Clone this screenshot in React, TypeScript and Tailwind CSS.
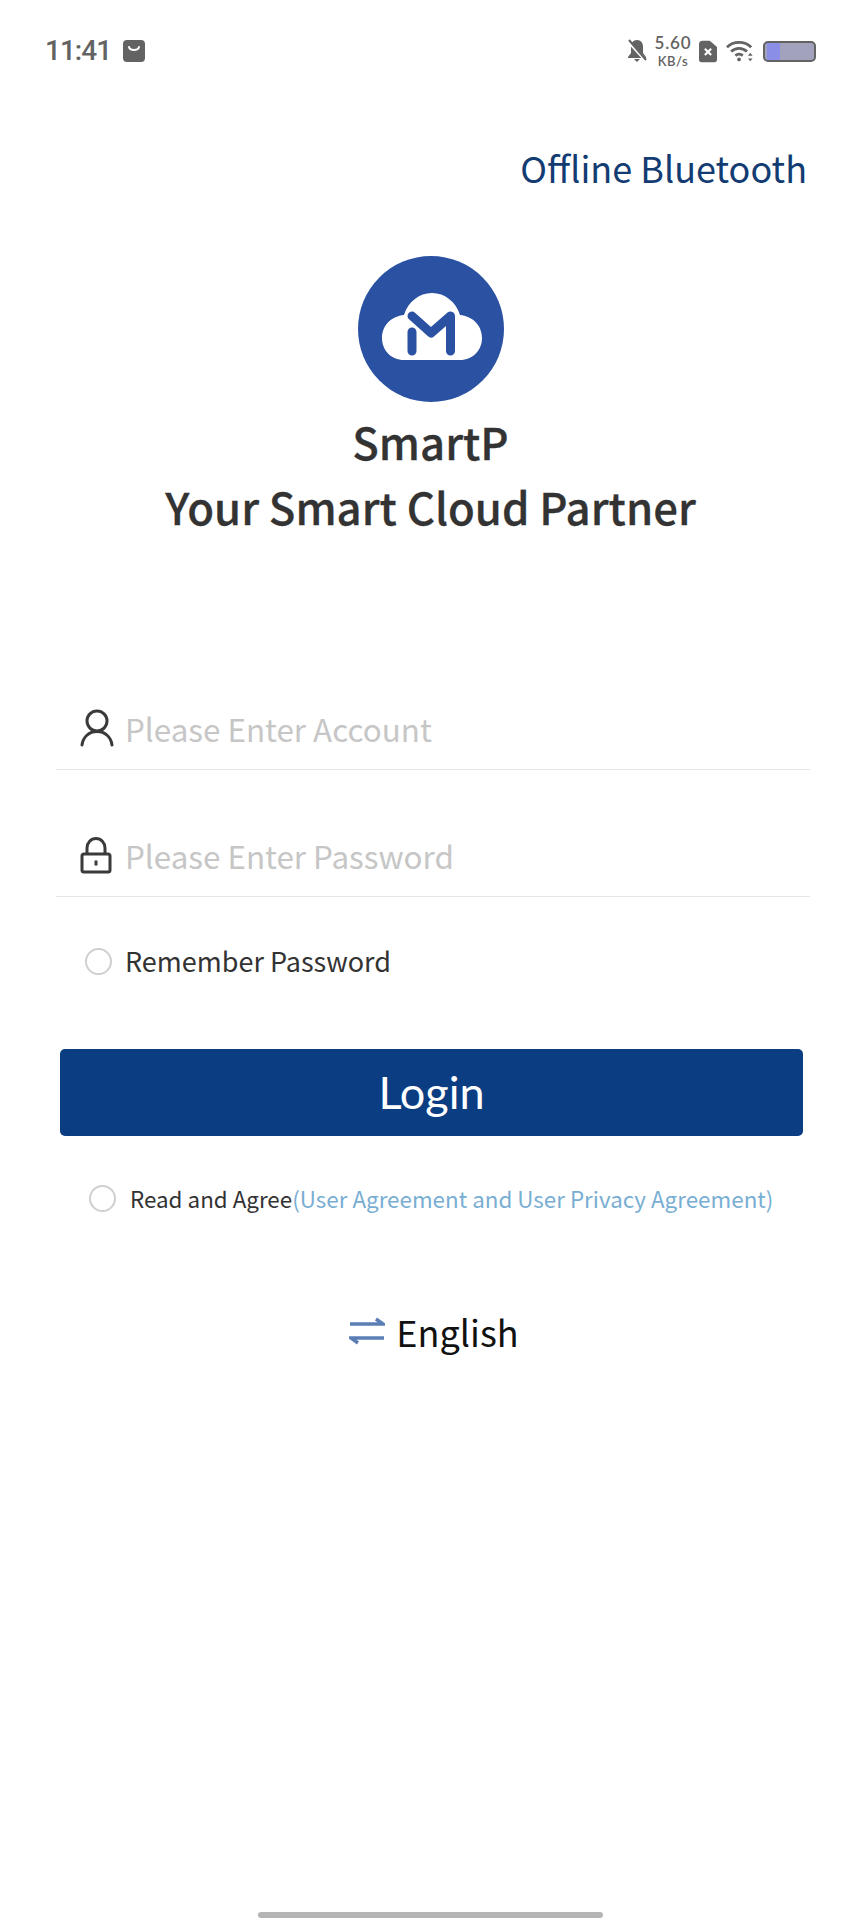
const font = "font-['Noto_Sans_CJK_SC','Noto_Sans',sans-serif]";

const StatusBar = () => (
  <div className="flex h-[102px] items-center justify-between pl-[45px] pr-[45px]">
    <div className="flex items-center gap-[12px]">
      <span className="font-['Roboto',sans-serif] text-[28px] font-medium leading-none tracking-[-1px] text-[#636363]">
        11:41
      </span>
      <svg width="22" height="22" viewBox="0 0 22 22">
        <rect width="22" height="22" rx="4" fill="#636363" />
        <path d="M6 7c1 4 9 4 10 0" fill="none" stroke="#fff" strokeWidth="2" strokeLinecap="round" />
      </svg>
    </div>
    <div className="flex items-center">
      <svg width="20" height="24" viewBox="0 0 20 24" className="mr-[7px]">
        <path d="M10 1c-4 0-6 3-6 7v6l-3 4v1h18v-1l-3-4V8c0-4-2-7-6-7z" fill="#636363" />
        <path d="M7 20h6l-3 3z" fill="#636363" />
        <path d="M1 2l18 20" stroke="#fff" strokeWidth="3" />
        <path d="M2 1l17 20" stroke="#636363" strokeWidth="2" />
      </svg>
      <div className="mr-[7px] flex w-[38px] flex-col items-center font-['Lato',sans-serif] font-semibold text-[#636363]">
        <span className="text-[17px] leading-[20px] tracking-[0.8px]">5.60</span>
        <span className="text-[13px] leading-[16px] tracking-[0.5px]">KB/s</span>
      </div>
      <svg width="18" height="23" viewBox="0 0 20 24" className="mr-[9px]">
        <path d="M4 0h8l8 7v14a3 3 0 0 1-3 3H3a3 3 0 0 1-3-3V4a4 4 0 0 1 4-4z" fill="#636363" />
        <path d="M6.500 9l7 7M13.500 9l-7 7" stroke="#fff" strokeWidth="2.400" />
      </svg>
      <svg width="28" height="22" viewBox="0 0 30 22" className="mr-[9px]">
        <path d="M1 7c7-7 19-7 26 0" fill="none" stroke="#636363" strokeWidth="3" />
        <path d="M5.500 11.500c5-4.500 12-4.500 17 0" fill="none" stroke="#636363" strokeWidth="3" />
        <path d="M10 16c2.500-2 5.500-2 8 0" fill="none" stroke="#636363" strokeWidth="3" />
        <circle cx="14" cy="20" r="2" fill="#636363" />
        <path d="M26 13l-2.500 3h5zM26 22l-2.500-3h5z" fill="#636363" />
      </svg>
      <div className="h-[21px] w-[53px] overflow-hidden rounded-[5px] border-2 border-[#636363] bg-[#a2a2bd]">
        <div className="ml-[2px] h-full w-[13px] bg-[#8a8ee6]" />
      </div>
    </div>
  </div>
);

const Logo = () => (
  <svg width="146" height="146" viewBox="0 0 146 146">
    <circle cx="73" cy="73" r="73" fill="#2b51a3" />
    <path
      d="M46 104C33 104 24 94 24 82C24 69 34 60 46 59C50 46 61 37 74 37C87 37 98 46 102 59C114 60 124 69 124 82C124 94 115 104 102 104Z"
      fill="#fff"
    />
    <path
      d="M54 60L73 77L92.500 60V95M54 76V95"
      fill="none"
      stroke="#2b51a3"
      strokeWidth="9"
      strokeLinecap="round"
      strokeLinejoin="round"
    />
  </svg>
);

const UserIcon = () => (
  <svg width="36" height="38" viewBox="0 0 36 38" fill="none" stroke="#3a3a3a" strokeWidth="3" strokeLinecap="round">
    <circle cx="17" cy="12" r="10" />
    <path d="M2 36C3 28 9 22.500 17 22.500S31 28 32 36" />
  </svg>
);

const LockIcon = () => (
  <svg width="32" height="38" viewBox="0 0 32 38" fill="none" stroke="#3a3a3a" strokeWidth="3">
    <rect x="2" y="18" width="28" height="18" rx="2" />
    <path d="M7 18v-6a9 9.500 0 0 1 18 0v6" />
    <path d="M16 24.500v5" />
  </svg>
);

const InputRow = ({ icon, placeholder }: { icon: React.ReactNode; placeholder: string }) => (
  <div className="flex h-[65px] items-start border-b border-[#e6e6e6] pl-[24px]">
    <div className="flex h-[46px] w-[45px] items-center">{icon}</div>
    <span className="pt-[1px] text-[31.400px] leading-[46px] text-[#c6c6c6]">{placeholder}</span>
  </div>
);

const Radio = () => <span className="h-[27px] w-[27px] shrink-0 rounded-full border-2 border-[#cfcfcf]" />;

export default function App() {
  return (
    <div className={`${font} flex min-h-[1920px] flex-col bg-white`}>
      <StatusBar />

      <div className="mt-[40px] flex justify-end pr-[54px]">
        <button className="text-[36px] leading-[50px] text-[#123c72]">Offline Bluetooth</button>
      </div>

      <div className="mt-[64px] flex flex-col items-center text-[#333333]">
        <Logo />
        <h1 className="mt-[7px] text-[43.700px] font-medium leading-[65px] [-webkit-text-stroke:0.3px_#333333]">SmartP</h1>
        <h2 className="text-[43.700px] font-medium leading-[65px] [-webkit-text-stroke:0.3px_#333333]">
          Your Smart Cloud Partner
        </h2>
      </div>

      <div className="ml-[56px] mr-[51px] mt-[166px]">
        <InputRow icon={<UserIcon />} placeholder="Please Enter Account" />
        <div className="mt-[62px]">
          <InputRow icon={<LockIcon />} placeholder="Please Enter Password" />
        </div>
      </div>

      <div className="ml-[85px] mt-[43px] flex items-center gap-[13px]">
        <Radio />
        <span className="text-[27px] leading-[42px] text-[#333333]">Remember Password</span>
      </div>

      <button className="ml-[60px] mr-[58px] mt-[67px] h-[87px] rounded-[5px] bg-[#0b3d83] font-['Lato',sans-serif] text-[45px] text-white">
        Login
      </button>

      <div className="ml-[89px] mt-[44px] flex items-center gap-[14px] text-[22.400px] leading-[36px]">
        <Radio />
        <span className="text-[#333333]">
          Read and Agree<span className="text-[#79aed3]">(User Agreement and User Privacy Agreement)</span>
        </span>
      </div>

      <div className="mt-[90px] flex items-center justify-center gap-[11px] pl-[7px]">
        <svg width="36" height="30" viewBox="0 0 36 30">
          <path d="M1 8h33l-7-5M35 22H2l7 5" fill="none" stroke="#5b7fb5" strokeWidth="3.500" />
        </svg>
        <span className="text-[36px] leading-[50px] text-[#111111]">English</span>
      </div>

      <div className="mt-auto flex justify-center pb-[2px]">
        <div className="h-[6px] w-[345px] rounded-full bg-[#b5b5b5]" />
      </div>
    </div>
  );
}
